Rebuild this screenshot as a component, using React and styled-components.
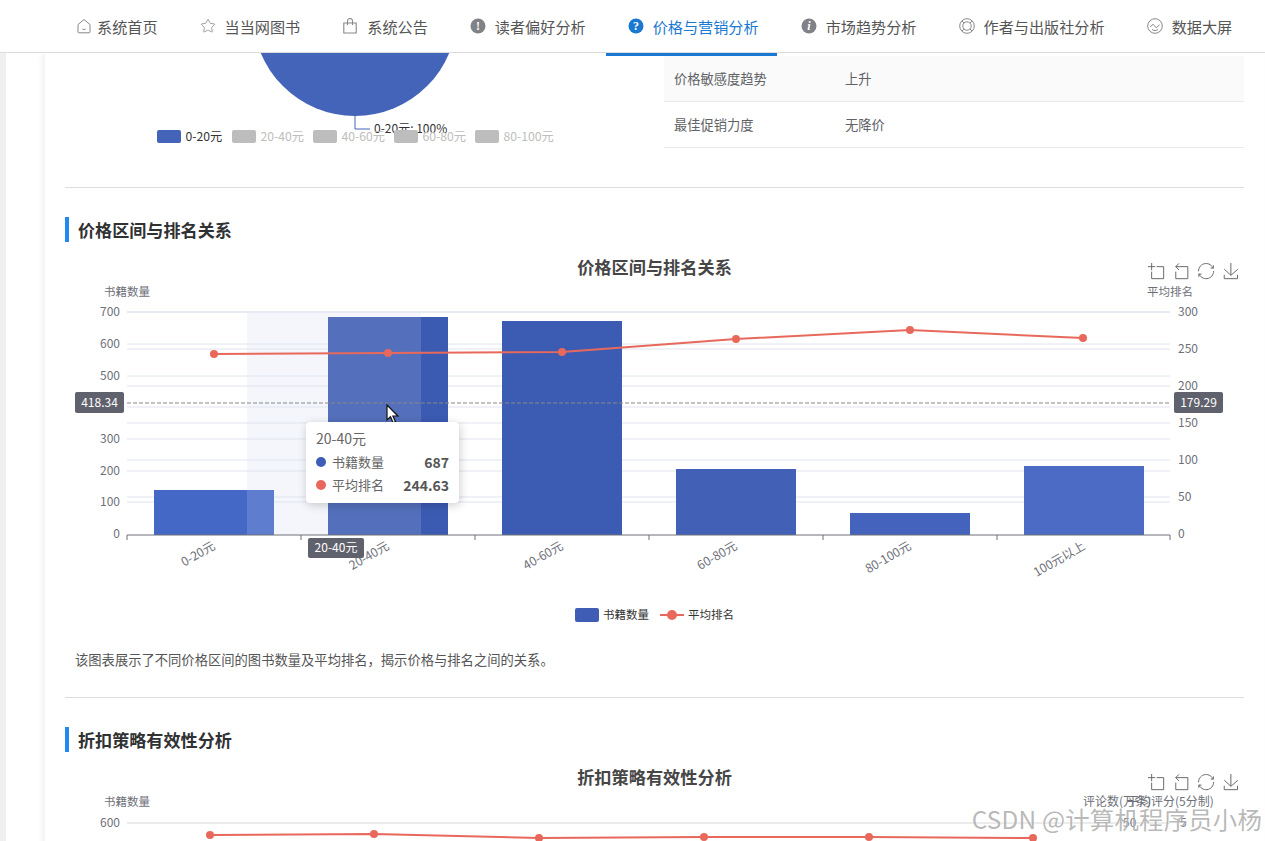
import React from 'react';
import styled, { createGlobalStyle } from 'styled-components';
import { Star } from 'lucide-react';

const GlobalStyle = createGlobalStyle`
  html, body {
    margin: 0;
    padding: 0;
    background: #fff;
    font-family: "Noto Sans CJK SC", "Noto Sans", sans-serif;
  }
`;

const Page = styled.div`
  position: relative;
  width: 1265px;
  height: 841px;
  overflow: hidden;
  background: #fff;
`;

const Nav = styled.nav`
  position: relative;
  z-index: 2;
  display: flex;
  gap: 2px;
  height: 52px;
  padding-left: 54px;
  background: #fff;
  border-bottom: 1px solid #dcdcdc;
  box-sizing: content-box;
`;

const NavItem = styled.div`
  position: relative;
  display: flex;
  align-items: center;
  padding: 0 18px 0 22px;
  font-size: 15.15px;
  color: ${props => (props.$active ? '#1a78d2' : '#555')};
  white-space: nowrap;

  ${props => props.$active && `
    &::after {
      content: '';
      position: absolute;
      left: 0;
      right: 0;
      bottom: -4px;
      height: 3px;
      background: #1a78d2;
    }
  `}
`;

const NavIconBox = styled.span`
  display: flex;
  width: 16px;
  height: 16px;
  margin-right: ${props => (props.$tight ? '5px' : '9px')};
`;

const Body = styled.div`
  display: flex;
`;

const Strip = styled.div`
  flex: none;
  width: 6px;
  height: 788px;
  background: #eef0f2;
`;

const Gutter = styled.div`
  flex: none;
  width: 39px;
`;

const Card = styled.main`
  flex: 1;
  min-width: 0;
  margin-right: 2px;
  padding: 0 19px 0 20px;
  background: #fff;
  box-shadow: -3px 0 6px rgba(0, 0, 0, 0.06);
`;

const TopRow = styled.div`
  display: flex;
  justify-content: space-between;
  height: 134px;
`;

const PieChart = styled.svg`
  display: block;
  width: 590px;
  height: 100px;
  font-family: "Noto Sans CJK SC", sans-serif;
`;

const InfoTable = styled.div`
  width: 580px;
  margin-top: 3px;
  font-size: 13.25px;
  color: #606266;
`;

const InfoRow = styled.div`
  display: grid;
  grid-template-columns: 171px 1fr;
  align-items: center;
  height: 45px;
  padding-left: 10px;
  background: ${props => (props.$shaded ? '#fafafa' : '#fff')};
  border-bottom: 1px solid #e8e9eb;
`;

const Divider = styled.hr`
  height: 1px;
  margin: ${props => props.$top || 0}px 0 29px;
  border: none;
  background: #dcdfe0;
`;

const SectionTitle = styled.h3`
  height: 25px;
  margin: 0 0 8px;
  padding-left: 9px;
  border-left: 4px solid #2288f2;
  font-size: 17.1px;
  line-height: 25px;
  font-weight: 700;
  color: #303133;
`;

const ChartWrap = styled.div`
  position: relative;
  width: 1179px;
  height: ${props => props.$height}px;
`;

const ChartSvg = styled.svg`
  display: block;
  width: 1179px;
  height: 100%;
  font-family: "Noto Sans CJK SC", sans-serif;
`;

const Tooltip = styled.div`
  position: absolute;
  left: 241px;
  top: 172px;
  width: 133px;
  height: 61px;
  padding: 8px 10px 12px;
  background: #fff;
  border-radius: 4px;
  box-shadow: 1px 2px 10px rgba(0, 0, 0, 0.2);
  color: #666;
`;

const TooltipTitle = styled.div`
  font-size: 14px;
  line-height: 16px;
  margin-bottom: 4px;
`;

const TooltipRow = styled.div`
  display: flex;
  align-items: center;
  height: 23px;
  font-size: 13px;
`;

const Dot = styled.span`
  width: 10px;
  height: 10px;
  margin-right: 6px;
  border-radius: 50%;
  background: ${props => props.$color};
`;

const TooltipValue = styled.b`
  margin-left: auto;
  font-size: 14px;
  color: #555;
`;

const Caption = styled.p`
  height: 20px;
  margin: 10px 0 0;
  padding-left: 10px;
  font-size: 13.3px;
  line-height: 20px;
  color: #555;
`;

const Watermark = styled.div`
  position: absolute;
  z-index: 3;
  top: 802px;
  right: 3px;
  font-size: 24.4px;
  line-height: 34px;
  letter-spacing: 0.2px;
  color: rgba(125, 125, 125, 0.55);
  text-shadow: 0 0 2px rgba(255, 255, 255, 0.9);
  white-space: nowrap;
`;

const Ring = () => (
  <svg viewBox="0 0 16 16" width="16" height="16" fill="none" stroke="#888" strokeWidth="1">
    <circle cx="8" cy="8" r="7.3" />
    <circle cx="8" cy="8" r="4.2" />
    <path d="M3 3l2 2M13 3l-2 2M3 13l2-2M13 13l-2-2" />
  </svg>
);

const GlyphDot = ({ color, glyph, italic }) => (
  <svg viewBox="0 0 16 16" width="16" height="16">
    <circle cx="8" cy="8" r="7.5" fill={color} />
    <text x="8" y="12.4" textAnchor="middle" fill="#fff" fontSize="12" fontWeight="700"
      fontStyle={italic ? 'italic' : 'normal'} fontFamily="Liberation Serif, serif">{glyph}</text>
  </svg>
);

const HomeIcon = () => (
  <svg viewBox="0 0 16 16" width="16" height="16" fill="none" stroke="#888" strokeWidth="1">
    <path d="M2 6.6 8 1.5l6 5.1V14a.8.8 0 0 1-.8.8H2.8A.8.8 0 0 1 2 14z" />
    <path d="M6.3 11c.9.7 2.5.7 3.4 0" />
  </svg>
);

const BagIcon = () => (
  <svg viewBox="0 0 16 16" width="16" height="16" fill="none" stroke="#888" strokeWidth="1.1">
    <path d="M1.800 5h12.400v10H1.800z" />
    <path d="M5.500 7V3a2.500 2.500 0 0 1 5 0v4" />
  </svg>
);

const ScreenIcon = () => (
  <svg viewBox="0 0 16 16" width="16" height="16" fill="none" stroke="#888" strokeWidth="1">
    <circle cx="8" cy="8" r="7.3" />
    <path d="M3.200 9 6 6.200l3.200 3.600 3.400-3M5 11.500c1.800 1.400 4.200 1.400 6 0" />
  </svg>
);

const navItems = [
  { label: '系统首页', icon: <HomeIcon />, tight: true },
  { label: '当当网图书', icon: <Star size={16} color="#888" strokeWidth={1.2} /> },
  { label: '系统公告', icon: <BagIcon /> },
  { label: '读者偏好分析', icon: <GlyphDot color="#808287" glyph="!" /> },
  { label: '价格与营销分析', icon: <GlyphDot color="#1a78d2" glyph="?" />, active: true },
  { label: '市场趋势分析', icon: <GlyphDot color="#808287" glyph="i" italic /> },
  { label: '作者与出版社分析', icon: <Ring /> },
  { label: '数据大屏', icon: <ScreenIcon /> },
];

const toolboxPaths = [
  'M0,13.5h26.9 M13.5,26.9V0 M32.1,13.5H58V58H13.5 V32.1',
  'M22,1.4L9.9,13.5l12.3,12.3 M10.3,13.5H54.9v44.6 H10.3v-26',
  'M3.8,33.4 M47,18.9h9.8V8.7 M56.3,20.1 C52.1,9,40.5,0.6,26.8,2.1C12.6,3.7,1.6,16.2,2.1,30.6 M13,41.1H3.1v10.2 M3.7,39.9c4.2,11.1,15.8,19.5,29.5,18 c14.2-1.6,25.2-14.1,24.7-28.5',
  'M4.7,22.9L29.3,45.5L54.7,23.4M4.6,43.6L4.6,58L53.8,58L53.8,43.6M29.2,45.1L29.2,0',
];

const Toolbox = ({ y }) => (
  <g fill="none" stroke="#666" strokeWidth="3.6">
    {toolboxPaths.map((d, i) => (
      <path key={i} d={d} transform={`translate(${1148 + i * 25},${y}) scale(0.27)`} />
    ))}
  </g>
);

const leftTicks = [[700, 312], [600, 344], [500, 376], [300, 439], [200, 471], [100, 502], [0, 534]];
const leftGrid = [312, 344, 376, 407, 439, 471, 502];
const rightTicks = [[300, 312], [250, 349], [200, 386], [150, 423], [100, 460], [50, 497], [0, 534]];
const axisTicks = [127, 301, 475, 649, 823, 997, 1170];
const bars = [
  { x: 154, top: 490, color: '#4468c6' },
  { x: 328, top: 317, color: '#3b5bb3' },
  { x: 502, top: 321, color: '#3c5bb3' },
  { x: 676, top: 469, color: '#4160b6' },
  { x: 850, top: 513, color: '#4363bc' },
  { x: 1024, top: 466, color: '#4b6bc5' },
];
const linePoints = [[214, 354], [388, 353], [562, 352], [736, 339], [910, 330], [1083, 338]];
const xLabels = [['0-20元', 214], ['20-40元', 388], ['40-60元', 562], ['60-80元', 736], ['80-100元', 910], ['100元以上', 1084]];
const discountPoints = [[210, 835], [374, 834], [539, 838], [704, 837], [869, 837], [1033, 838]];
const pieLegend = [['0-20元', 157, '#4464ba'], ['20-40元', 232], ['40-60元', 313], ['60-80元', 394], ['80-100元', 475]];

const toPolyline = points => points.map(p => p.join(',')).join(' ');

const PricePie = () => (
  <PieChart viewBox="65 53 590 100">
    <circle cx="355" cy="14" r="102" fill="#4464ba" />
    <path d="M355 116V129H370" fill="none" stroke="#4464ba" />
    <text x="374" y="133" fontSize="12" fill="#333">0-20元: 100%</text>
    {pieLegend.map(([label, x, color]) => (
      <g key={label}>
        <rect x={x} y="130" width="24" height="13" rx="2" fill={color || '#bdbdbd'} />
        <text x={x + 28.500} y="141" fontSize="12.200" fill={color ? '#333' : '#bdbdbd'}>{label}</text>
      </g>
    ))}
  </PieChart>
);

const RankChart = () => (
  <ChartSvg viewBox="65 250 1179 390">
    <text x="654.500" y="274" textAnchor="middle" fontSize="17.200" fontWeight="700" fill="#464646">价格区间与排名关系</text>
    <Toolbox y={263} />
    <text x="104" y="296" fontSize="11.500" fill="#6e7079">书籍数量</text>
    <text x="1147" y="296" fontSize="11.500" fill="#6e7079">平均排名</text>

    <rect x="247" y="313" width="174" height="222" fill="#f4f6fb" />
    {leftGrid.map(y => <path key={y} d={`M127 ${y}H1170`} stroke="#dfe4ee" />)}
    {rightTicks.slice(0, 6).map(([, y]) => <path key={y} d={`M127 ${y}H1170`} stroke="#dfe4ee" />)}

    {leftTicks.map(([v, y]) => (
      <text key={v} x="120" y={y + 4} textAnchor="end" fontSize="12" fill="#6e7079">{v}</text>
    ))}
    {rightTicks.map(([v, y]) => (
      <text key={v} x="1178" y={y + 4} fontSize="12" fill="#6e7079">{v}</text>
    ))}

    {bars.map(b => (
      <rect key={b.x} x={b.x} y={b.top} width="120" height={535 - b.top} fill={b.color} />
    ))}
    <rect x="247" y="490" width="27" height="45" fill="#fff" opacity="0.14" />
    <rect x="328" y="317" width="93" height="218" fill="#fff" opacity="0.13" />

    <path d="M127 535H1170" stroke="#6e7079" />
    {axisTicks.map(x => <path key={x} d={`M${x} 535v5`} stroke="#6e7079" />)}
    {xLabels.map(([label, x]) => (
      <text key={label} x={x} y="549" textAnchor="end" fontSize="12.200" fill="#6e7079"
        transform={`rotate(-30 ${x} 545)`}>{label}</text>
    ))}

    <polyline points={toPolyline(linePoints)} fill="none" stroke="#e8695c" strokeWidth="2" />
    {linePoints.map(([x, y]) => <circle key={x} cx={x} cy={y} r="4" fill="#e8695c" />)}

    <path d="M127 403H1170" stroke="#888" strokeDasharray="4 2" />
    <rect x="75" y="392" width="49" height="21" rx="2" fill="#5f616c" />
    <text x="99.500" y="406.500" textAnchor="middle" fontSize="12" fill="#fff">418.34</text>
    <rect x="1174" y="392" width="49" height="21" rx="2" fill="#5f616c" />
    <text x="1198.500" y="406.500" textAnchor="middle" fontSize="12" fill="#fff">179.29</text>
    <rect x="308" y="538" width="56" height="20" rx="2" fill="#5f616c" />
    <text x="336" y="552" textAnchor="middle" fontSize="12" fill="#fff">20-40元</text>

    <rect x="575" y="608" width="24" height="14" rx="2" fill="#3f5db4" />
    <text x="603" y="619" fontSize="11.500" fill="#333">书籍数量</text>
    <path d="M660 615H684" stroke="#e8695c" strokeWidth="2" />
    <circle cx="672" cy="615" r="5" fill="#e8695c" />
    <text x="688" y="619" fontSize="11.500" fill="#333">平均排名</text>

    <path d="M387 405v15l3.500-3.200 2.600 6 2.400-1-2.600-5.800h5z" fill="#fff" stroke="#111" strokeWidth="1.200" />
  </ChartSvg>
);

const DiscountChart = () => (
  <ChartSvg viewBox="65 760 1179 200">
    <text x="654.500" y="784" textAnchor="middle" fontSize="17.200" fontWeight="700" fill="#464646">折扣策略有效性分析</text>
    <Toolbox y={774} />
    <text x="104" y="806" fontSize="11.500" fill="#6e7079">书籍数量</text>
    <text x="1083" y="806" fontSize="12" fill="#6e7079">评论数(万条)</text>
    <text x="1127" y="806" fontSize="12" fill="#6e7079">平均评分(5分制)</text>
    <path d="M127 823H1170" stroke="#d8d8d8" />
    <text x="120" y="827" textAnchor="end" fontSize="12" fill="#6e7079">600</text>
    <text x="1123" y="827" fontSize="12" fill="#6e7079">50</text>
    <text x="1180" y="827" fontSize="12" fill="#6e7079">5</text>
    <polyline points={toPolyline(discountPoints)} fill="none" stroke="#e8695c" strokeWidth="2" />
    {discountPoints.map(([x, y]) => <circle key={x} cx={x} cy={y} r="4" fill="#e8695c" />)}
  </ChartSvg>
);

const App = () => (
  <Page>
    <GlobalStyle />
    <Nav>
      {navItems.map(item => (
        <NavItem key={item.label} $active={item.active}>
          <NavIconBox $tight={item.tight}>{item.icon}</NavIconBox>
          {item.label}
        </NavItem>
      ))}
    </Nav>
    <Body>
      <Strip />
      <Gutter />
      <Card>
        <TopRow>
          <PricePie />
          <InfoTable>
            <InfoRow $shaded><span>价格敏感度趋势</span><span>上升</span></InfoRow>
            <InfoRow><span>最佳促销力度</span><span>无降价</span></InfoRow>
          </InfoTable>
        </TopRow>
        <Divider />
        <SectionTitle>价格区间与排名关系</SectionTitle>
        <ChartWrap $height={390}>
          <RankChart />
          <Tooltip>
            <TooltipTitle>20-40元</TooltipTitle>
            <TooltipRow><Dot $color="#3f5db4" />书籍数量<TooltipValue>687</TooltipValue></TooltipRow>
            <TooltipRow><Dot $color="#e8695c" />平均排名<TooltipValue>244.63</TooltipValue></TooltipRow>
          </Tooltip>
        </ChartWrap>
        <Caption>该图表展示了不同价格区间的图书数量及平均排名，揭示价格与排名之间的关系。</Caption>
        <Divider $top={27} />
        <SectionTitle>折扣策略有效性分析</SectionTitle>
        <ChartWrap $height={200}>
          <DiscountChart />
        </ChartWrap>
      </Card>
    </Body>
    <Watermark>CSDN @计算机程序员小杨</Watermark>
  </Page>
);

export default App;
